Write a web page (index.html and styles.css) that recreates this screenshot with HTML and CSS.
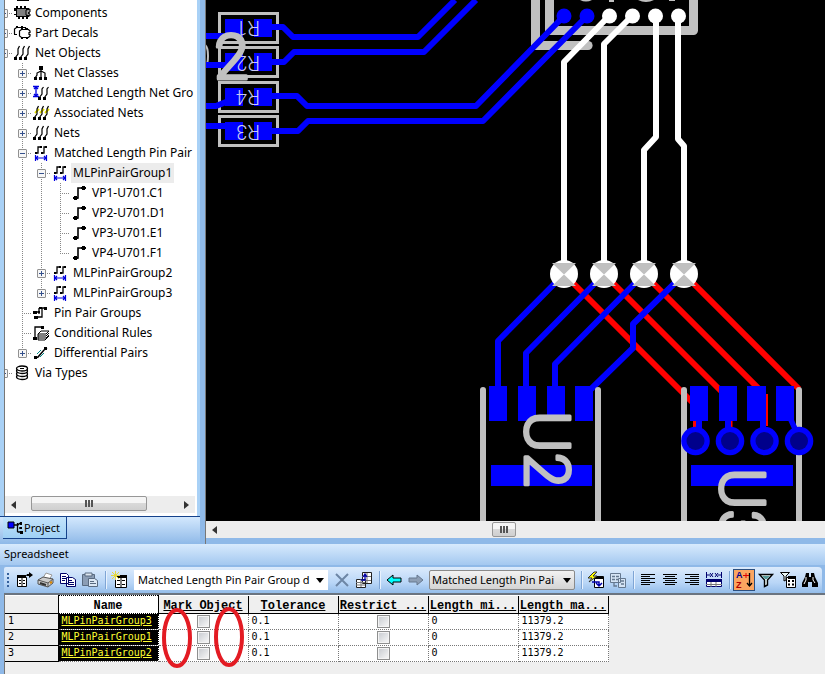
FILE: index.html
```html
<!DOCTYPE html>
<html lang="en">
<head>
<meta charset="utf-8">
<title>PCB Layout - Project</title>
<link rel="stylesheet" href="styles.css">
</head>
<body>
<svg class="defs" aria-hidden="true">
  <symbol id="i-comp" viewBox="0 0 18 16"><path d="M1 3h2V1h2v2h2V1h2v2h2V1h2v2h3v9h-1v2h-2v-2h-2v2H9v-2H7v2H5v-2H3v-2H1V9h2V6H1z" fill="#000"/><path d="M4 4h9v7H4z" fill="#808080"/><path d="M13 5l4-1v3l-2 1 2 1v2l-4-1z" fill="#999" stroke="#000"/></symbol>
  <symbol id="i-decal" viewBox="0 0 18 16"><path d="M1.500 9V4l2-1.500h9V4M1 9.500h3M6.500 6l2-1.500h7l1.500 1.500v1.500h-1v2h1V11l-1.500 1.500h-7L6.500 11z" fill="#fff" stroke="#000" stroke-width="1.200"/><path d="M3 2h2M8 2h2M8 13h2M13 13h2M8 4h2M13 4h2" stroke="#000" stroke-width="2"/></symbol>
  <symbol id="i-nets" viewBox="0 0 18 16"><g fill="none" stroke="#000" stroke-width="1.200"><path d="M6.500 1L5 4v5l-3 4M11.500 1L10 4v5l-3 4M16.500 1L15 4v5l-3 4"/></g><path d="M1 12h3v3H1zM6 12h3v3H6zM11 12h3v3h-3z"/></symbol>
  <symbol id="i-assoc" viewBox="0 0 18 16"><path d="M3 8l4-4M8 8l4-4M13 8l4-4" stroke="#e8e000" stroke-width="2"/><use href="#i-nets"/></symbol>
  <symbol id="i-class" viewBox="0 0 18 16"><g fill="none" stroke="#000" stroke-width="1.200"><path d="M9 1v12M9 6L5 8v2l-2 3M9 6l4 2v5"/></g><path d="M7 1h4v4H7zM2 12h3v3H2zM7 12h3v3H7zM12 12h3v3h-3z"/></symbol>
  <symbol id="i-mlnet" viewBox="0 0 18 16"><path d="M1 1.500h6M1 11.500h6M4 2v9M2 4l2-2 2 2M2 9l2 2 2-2" fill="none" stroke="#0000e0" stroke-width="1.300"/><path d="M11.500 2L10 4v5l-3 4M16.500 2L15 4v5l-3 4" fill="none" stroke="#000" stroke-width="1.200"/><path d="M6 12h3v3H6zM11 12h3v3h-3z"/></symbol>
  <symbol id="i-mlpin" viewBox="0 0 18 16"><path d="M3 8h3V2h4M9 8h3V2h3" fill="none" stroke="#000" stroke-width="1.300"/><path d="M3 7h2v2H3zM8 1h2v2H8zM9 7h2v2H9zM13 1h2v2h-2z"/><path d="M3.500 10v6M14.500 10v6M4 13h10M6 11l-2 2 2 2M12 11l2 2-2 2" fill="none" stroke="#0000e0" stroke-width="1.200"/></symbol>
  <symbol id="i-pin" viewBox="0 0 18 16"><path d="M4 13h4V3h5" fill="none" stroke="#000" stroke-width="1.600"/><path d="M4 11h3v4H4zM3 12h5v2H3zM12 1h3v4h-3zM11 2h5v2h-5z"/></symbol>
  <symbol id="i-pinpair" viewBox="0 0 18 16"><path d="M3 7h4M3 12h7V3h4M7 3v6" fill="none" stroke="#000" stroke-width="1.300"/><path d="M1 6h4v3H1zM2 11h4v3H2zM7 2h3v2H7zM12 2h3v3h-3zM6 6h2v2H6z"/></symbol>
  <symbol id="i-cond" viewBox="0 0 18 16"><path d="M3 13V2h8" fill="none" stroke="#000" stroke-width="1.300"/><path d="M1 12h4v3H1zM9 1h3v3H9z"/><path d="M6 9l3-3h8l-3 3zM6 11h8l3-3M6 13h8l3-3M6 15h7l4-4M6 9v6" fill="#fff" stroke="#000"/></symbol>
  <symbol id="i-diff" viewBox="0 0 18 16"><path d="M3 13l3-1 6-7 3-2" fill="none" stroke="#000" stroke-width="1.500"/><path d="M5 9l4-4M8 12l4-4" stroke="#088" fill="none"/><path d="M2 11h3v3H2zM12 2h3v3h-3z"/></symbol>
  <symbol id="i-via" viewBox="0 0 18 16"><g fill="#fff" stroke="#000" stroke-width="1.300"><ellipse cx="9" cy="12" rx="5.500" ry="2.500"/><ellipse cx="9" cy="9" rx="5.500" ry="2.500"/><ellipse cx="9" cy="6" rx="5.500" ry="2.500"/><ellipse cx="9" cy="3.500" rx="5.500" ry="2.500"/></g><path d="M7 3.500h4" stroke="#000"/></symbol>
</svg>

<main class="work">
  <aside class="side">
    <div class="panel">
      <ul class="tree">
        <li><i class="g"></i><i class="stub"></i></li>
        <li><i class="g h"><button class="box plus" aria-label="Expand"></button></i><svg class="ic"><use href="#i-comp"/></svg><span>Components</span></li>
        <li><i class="g h"><button class="box plus" aria-label="Expand"></button></i><svg class="ic"><use href="#i-decal"/></svg><span>Part Decals</span></li>
        <li><i class="g h"><button class="box" aria-label="Collapse"></button></i><svg class="ic"><use href="#i-nets"/></svg><span>Net Objects</span></li>
        <li><i class="g"></i><i class="g v h"><button class="box plus" aria-label="Expand"></button></i><svg class="ic"><use href="#i-class"/></svg><span>Net Classes</span></li>
        <li><i class="g"></i><i class="g v h"><button class="box plus" aria-label="Expand"></button></i><svg class="ic"><use href="#i-mlnet"/></svg><span>Matched Length Net Gro</span></li>
        <li><i class="g"></i><i class="g v h"><button class="box plus" aria-label="Expand"></button></i><svg class="ic"><use href="#i-assoc"/></svg><span>Associated Nets</span></li>
        <li><i class="g"></i><i class="g v h"><button class="box plus" aria-label="Expand"></button></i><svg class="ic"><use href="#i-nets"/></svg><span>Nets</span></li>
        <li><i class="g"></i><i class="g v h"><button class="box" aria-label="Collapse"></button></i><svg class="ic"><use href="#i-mlpin"/></svg><span>Matched Length Pin Pair</span></li>
        <li><i class="g"></i><i class="g v"></i><i class="g v h"><button class="box" aria-label="Collapse"></button></i><svg class="ic"><use href="#i-mlpin"/></svg><span class="sel">MLPinPairGroup1</span></li>
        <li><i class="g"></i><i class="g v"></i><i class="g v"></i><i class="g v h"></i><svg class="ic"><use href="#i-pin"/></svg><span>VP1-U701.C1</span></li>
        <li><i class="g"></i><i class="g v"></i><i class="g v"></i><i class="g v h"></i><svg class="ic"><use href="#i-pin"/></svg><span>VP2-U701.D1</span></li>
        <li><i class="g"></i><i class="g v"></i><i class="g v"></i><i class="g v h"></i><svg class="ic"><use href="#i-pin"/></svg><span>VP3-U701.E1</span></li>
        <li><i class="g"></i><i class="g v"></i><i class="g v"></i><i class="g v h end"></i><svg class="ic"><use href="#i-pin"/></svg><span>VP4-U701.F1</span></li>
        <li><i class="g"></i><i class="g v"></i><i class="g v h"><button class="box plus" aria-label="Expand"></button></i><svg class="ic"><use href="#i-mlpin"/></svg><span>MLPinPairGroup2</span></li>
        <li><i class="g"></i><i class="g v"></i><i class="g v h end"><button class="box plus" aria-label="Expand"></button></i><svg class="ic"><use href="#i-mlpin"/></svg><span>MLPinPairGroup3</span></li>
        <li><i class="g"></i><i class="g v h"></i><svg class="ic"><use href="#i-pinpair"/></svg><span>Pin Pair Groups</span></li>
        <li><i class="g"></i><i class="g v h"></i><svg class="ic"><use href="#i-cond"/></svg><span>Conditional Rules</span></li>
        <li><i class="g"></i><i class="g v h end"><button class="box plus" aria-label="Expand"></button></i><svg class="ic"><use href="#i-diff"/></svg><span>Differential Pairs</span></li>
        <li><i class="g h"><button class="box plus" aria-label="Expand"></button></i><svg class="ic"><use href="#i-via"/></svg><span>Via Types</span></li>
      </ul>
      <div class="hbar">
        <button class="arr" aria-label="Scroll left"><svg viewBox="0 0 5 8"><path d="M5 0v8L0 4z"/></svg></button>
        <div class="rail"><div class="thumb"></div></div>
        <button class="arr" aria-label="Scroll right"><svg viewBox="0 0 5 8"><path d="M0 0v8l5-4z"/></svg></button>
      </div>
    </div>
    <div class="tabs">
      <button class="tab"><svg viewBox="0 0 16 14"><path d="M1 1h6v6H1z" fill="#00f" stroke="#000"/><path d="M7 4h3M10.500 2v9M10.500 4.500l2-2h2M10.500 11h4M12 7h3" fill="none" stroke="#000" stroke-width="1.300"/><path d="M13 1h2v3h-2zM13 10h3v3h-3zM13 6h2v2h-2z"/></svg>Project</button>
    </div>
  </aside>

  <section class="view">
    <svg class="board" viewBox="206 0 619 521" preserveAspectRatio="xMinYMin slice" role="img" aria-label="Board layout">
      <rect x="206" y="0" width="2000" height="2000" fill="#000"/>
      <g fill="none" stroke="#c0c0c0" stroke-width="3">
        <rect x="219.500" y="13.500" width="58" height="29"/><rect x="219.500" y="47.500" width="58" height="29"/><rect x="219.500" y="82.500" width="58" height="29"/><rect x="219.500" y="116.500" width="58" height="29"/>
        <path d="M205 45q3 2 3 11t-3 10" stroke-width="2"/>
      </g>
      <g fill="none" stroke="#c0c0c0" stroke-width="9">
        <path d="M535.500 0v45.500H588" stroke-linejoin="miter"/><path d="M588 45.500h.1" stroke-linecap="round"/>
        <path d="M549.500 0v30.500H693.500V0" stroke-linejoin="round"/>
      </g>
      <path d="M580 0h12q-6 3-12 0zM609 0h5v2h-5zM638 0h16q-8 4-16 0zM669 0h6v1h-6z" fill="#c0c0c0"/>
      <g fill="#00f">
        <path d="M225 19h18v18h-18zM254 19h18v18h-18zM225 53h18v18h-18zM254 53h18v18h-18zM225 88h18v18h-18zM254 88h18v18h-18zM225 122h18v18h-18zM254 122h18v18h-18z"/>
        <circle cx="564" cy="16" r="7.500"/><circle cx="587" cy="16" r="7.500"/>
      </g>
      <g fill="none" stroke="#f00" stroke-width="6">
        <path d="M564 274L692 402M604 274l118 118M644 274l118 118M684 274l115 115"/>
        <path d="M694.500 418v10M731 418v10" stroke-width="3"/>
      </g>
      <g fill="none" stroke="#00f" stroke-width="6" stroke-linejoin="round">
        <path d="M564 16L476 106H307L297 96H268M587 16L483 121H308L298 131H268M455 0L418 37H293L283 27H268M476 0L424 52H294L284 62H268"/>
        <path d="M206 36h20M206 65h20M206 106h10l10-4M206 126h20"/>
        <path d="M564 274L498 341v60M604 274L526 353v48M644 274L555 364v37M684 274L633 324v24L588 392"/>
      </g>
      <g fill="none" stroke="#fff" stroke-width="6" stroke-linejoin="round"><path d="M609 16L564 62V274M632 16L604 44V274M656 16V137L644 150V274M678 16V139L684 146V274"/></g>
      <g fill="#fff"><circle cx="609.500" cy="16" r="7.500"/><circle cx="632.500" cy="16" r="7.500"/><circle cx="655.500" cy="16" r="7.500"/><circle cx="678.500" cy="16" r="7.500"/>
        <circle cx="564" cy="274" r="14"/><circle cx="604" cy="274" r="14"/><circle cx="644" cy="274" r="14"/><circle cx="684" cy="274" r="14"/></g>
      <path d="M552 263h24l-24 23h24zM592 263h24l-24 23h24zM632 263h24l-24 23h24zM672 263h24l-24 23h24z" fill="#c0c0c0"/>
      <g stroke="#c0c0c0" stroke-width="6" stroke-linecap="round"><path d="M483 390V2000M598 390V2000M684 390V2000M799 390V2000"/></g>
      <g fill="#00f">
        <path d="M489 386h18v35h-18zM518 386h18v35h-18zM547 386h18v35h-18zM575 386h18v35h-18zM491 465h101v21H491z"/>
        <path d="M690 386h18v35h-18zM719 386h18v35h-18zM747 386h19v35h-19zM776 386h18v35h-18zM691 465h102v21H691z"/>
        <path d="M696 420h6v10h-6zM725 420h6v10h-6zM760 420h6v10h-6zM788 420h6l5 11h-6z"/>
        <circle cx="695.500" cy="441" r="14.300"/><circle cx="730" cy="441" r="14.300"/><circle cx="764.500" cy="441" r="14.300"/><circle cx="799" cy="441" r="14.300"/>
      </g>
      <path d="M767 394v32" stroke="#f00" stroke-width="2"/>
      <g fill="#00008b"><circle cx="695.500" cy="441" r="9"/><circle cx="730" cy="441" r="9"/><circle cx="764.500" cy="441" r="9"/><circle cx="799" cy="441" r="9"/></g>
      <text class="ref" transform="translate(260 21) rotate(180)">R1</text>
      <text class="ref" transform="translate(260 56) rotate(180)">R2</text>
      <text class="ref" transform="translate(260 90) rotate(180)">R4</text>
      <text class="ref" transform="translate(260 125) rotate(180)">R3</text>
      <text class="big" x="214" y="79">2</text>
      <text class="big" transform="translate(525 411) rotate(90)">U2</text>
      <text class="big" transform="translate(720 468) rotate(90)">U3</text>
    </svg>
    <div class="hbar">
      <button class="arr" aria-label="Scroll left"><svg viewBox="0 0 5 8"><path d="M5 0v8L0 4z"/></svg></button>
      <div class="rail mid"><div class="thumb small"></div></div>
    </div>
  </section>
</main>

<section class="sheet">
  <h2>Spreadsheet</h2>
  <div class="tools">
    <i class="grip"></i>
    <button aria-label="Export"><svg viewBox="0 0 18 18"><path d="M2.500 6.500h9v9h-9z" fill="#fff" stroke="#000"/><path d="M2 4h9v3H2zM11 5l1-2h2V1l4 3-4 3V5z"/><path d="M4 9.500h2M8 9.500h2M4 12.500h2M8 12.500h2M7 7v9" stroke="#000"/></svg></button>
    <button aria-label="Print"><svg viewBox="0 0 18 18"><path d="M6 7l3-5 6 2-3 5z" fill="#fff" stroke="#999"/><path d="M1 9l5-3 10 2v4l-5 4-10-3z" fill="#ccc" stroke="#555"/><path d="M1 9l10 3 5-4M11 12v4" fill="none" stroke="#555"/><path d="M3 12l6 2" stroke="#333" stroke-width="2"/><path d="M13 12l2-1" stroke="#d80" stroke-width="2"/></svg></button>
    <button aria-label="Copy"><svg viewBox="0 0 18 18"><path d="M1.500 2.500h6l2 2v8h-8zM7.500 6.500h6l3 2v7h-9z" fill="#fff" stroke="#006"/><path d="M3 5.500h4M3 7.500h4M3 9.500h3M9 9.500h4M9 11.500h6M9 13.500h6" stroke="#006"/></svg></button>
    <button aria-label="Paste"><svg viewBox="0 0 18 18"><path d="M1.500 3.500h12v11h-12z" fill="#8b9db5" stroke="#596a80"/><path d="M4 2h7v3H4z" fill="#dde6f0" stroke="#596a80"/><path d="M7.500 7.500h6l3 2v6h-9z" fill="#dce8f5" stroke="#596a80"/><path d="M9 10.500h4M9 12.500h6" stroke="#596a80"/></svg></button>
    <i class="sep"></i>
    <button aria-label="New"><svg viewBox="0 0 18 18"><path d="M4.500 5.500h11v11h-11z" fill="#fff" stroke="#000"/><path d="M6 4h10v3H6z"/><path d="M6 9.500h3M11 9.500h3M6 13.500h3M11 13.500h3M10 7v9" stroke="#000"/><path d="M1 1l7 7M8 1L1 8M4.500 0v9M0 4.500h9" stroke="#e5d840"/></svg></button>
    <span class="combo c1"><select aria-label="Object type"><option>Matched Length Pin Pair Group d</option></select></span>
    <button aria-label="Delete"><svg viewBox="0 0 18 18"><path d="M3 3l12 12M15 3L3 15" stroke="#6d86a5" stroke-width="2"/></svg></button>
    <button aria-label="Transpose"><svg viewBox="0 0 18 18"><path d="M7.500 1.500h9v11h-9zM1.500 8.500h9v8h-9z" fill="#fff" stroke="#222"/><path d="M7 5.500h9M7 9.500h9M12 2v10M1 11.500h9M1 14h9M6 8v8" stroke="#777"/><path d="M6 9h4V4M8 6l2-3 2 3" fill="none" stroke="#00a" stroke-width="1.300"/></svg></button>
    <i class="sep"></i>
    <button aria-label="Back"><svg viewBox="0 0 18 18"><path d="M2 9l6-5v3h8v4H8v3z" fill="#0ff" stroke="#000"/></svg></button>
    <button aria-label="Forward"><svg viewBox="0 0 18 18"><path d="M16 9l-6-5v3H2v4h8v3z" fill="#8e9fb5" stroke="#66788f"/></svg></button>
    <span class="combo c2"><select aria-label="Group"><option>Matched Length Pin Pai</option></select></span>
    <i class="sep"></i>
    <button aria-label="Apply"><svg viewBox="0 0 18 18"><path d="M7.500 5.500h9v11h-9z" fill="#fff" stroke="#000"/><path d="M7 6h10v2H7z"/><path d="M7 1L1 7h4l-3 4 8-6H6l4-4z" fill="#ff0" stroke="#333"/><path d="M5 11h7v3M9 12l3 3 3-3" fill="none" stroke="#00a" stroke-width="1.500"/></svg></button>
    <button aria-label="Group items"><svg viewBox="0 0 18 18"><path d="M1.500 2.500h10v9h-10zM9.500 7.500h7v9h-7z" fill="#d5e4f5" stroke="#65788f"/><path d="M3 5.500h3M7 5.500h3M3 8.500h3M7 8.500h2M11 10h4M5 12v3h3M12 13h3" fill="none" stroke="#65788f" stroke-width="1.300"/></svg></button>
    <i class="sep"></i>
    <button aria-label="Align left"><svg viewBox="0 0 18 18"><path d="M2 3.500h14M2 5.500h9M2 7.500h14M2 9.500h9M2 11.500h14M2 13.500h9" stroke="#000"/></svg></button>
    <button aria-label="Align center"><svg viewBox="0 0 18 18"><path d="M2 3.500h14M4 5.500h10M2 7.500h14M4 9.500h10M2 11.500h14M4 13.500h10" stroke="#000"/></svg></button>
    <button aria-label="Align right"><svg viewBox="0 0 18 18"><path d="M2 3.500h14M7 5.500h9M2 7.500h14M7 9.500h9M2 11.500h14M7 13.500h9" stroke="#000"/></svg></button>
    <button aria-label="Fit columns"><svg viewBox="0 0 18 18"><path d="M1.500 8.500h15v7h-15z" fill="#fff" stroke="#00006e"/><path d="M1 8h16v3H1z" fill="#00006e"/><path d="M6 11v5M11 11v5M1 13.500h16" stroke="#777"/><path d="M1.500 1v6M16.500 1v6M2 4h3M13 4h3M5 2l3 4M8 2L5 6M10 2l3 4M13 2l-3 4" stroke="#00006e"/></svg></button>
    <i class="sep"></i>
    <button class="on" aria-label="Sort"><svg viewBox="0 0 18 18"><path d="M14.500 2v13M12 12l2.500 3 2.500-3" fill="none" stroke="#000" stroke-width="1.300"/><path d="M11 2v5M8 4.500h6" stroke="#d00"/><text x="1" y="7" class="az a">A</text><text x="1" y="17" class="az z">Z</text></svg></button>
    <button aria-label="Filter"><svg viewBox="0 0 18 18"><path d="M2.500 3.500h13L10.500 9v5l-3 1.500V9z" fill="#e8f5f5" stroke="#000" stroke-width="1.400"/><path d="M5 5h8l-3 3H8z" fill="#599"/></svg></button>
    <button aria-label="Filter options"><svg viewBox="0 0 18 18"><path d="M7.500 6.500h9v10h-9z" fill="#fff" stroke="#000"/><path d="M9 5h8v3H9z"/><path d="M9 10h2M13 10h2M9 13.500h2M13 13.500h2" stroke="#000" stroke-width="2"/><path d="M1.500 1.500h9L7 5v4l-2 1V5z" fill="#e8f5f5" stroke="#000"/></svg></button>
    <button aria-label="Find"><svg viewBox="0 0 18 18"><path d="M5 2h3v4h2V2h3l1 4 3 6v4h-6v-5H7v5H1v-4l3-6z"/><path d="M5 6v3L3 13M12 6v3l2 3" stroke="#fff" fill="none"/></svg></button>
  </div>
  <div class="grid">
    <table>
      <colgroup><col class="cn"><col class="cname"><col class="cv" span="5"></colgroup>
      <thead><tr><th></th><th class="name">Name</th><th><u>Mark Object</u></th><th><u>Tolerance</u></th><th><u>Restrict ...</u></th><th><u>Length mi...</u></th><th><u>Length ma...</u></th></tr></thead>
      <tbody>
        <tr><th>1</th><td class="nm">MLPinPairGroup3</td><td class="ck"><input type="checkbox" aria-label="Mark MLPinPairGroup3"></td><td>0.1</td><td class="ck"><input type="checkbox" aria-label="Restrict MLPinPairGroup3"></td><td>0</td><td>11379.2</td></tr>
        <tr><th>2</th><td class="nm">MLPinPairGroup1</td><td class="ck"><input type="checkbox" aria-label="Mark MLPinPairGroup1"></td><td>0.1</td><td class="ck"><input type="checkbox" aria-label="Restrict MLPinPairGroup1"></td><td>0</td><td>11379.2</td></tr>
        <tr><th>3</th><td class="nm">MLPinPairGroup2</td><td class="ck"><input type="checkbox" aria-label="Mark MLPinPairGroup2"></td><td>0.1</td><td class="ck"><input type="checkbox" aria-label="Restrict MLPinPairGroup2"></td><td>0</td><td>11379.2</td></tr>
      </tbody>
    </table>
    <svg class="marks" viewBox="0 0 84 66" aria-hidden="true"><g fill="none" stroke="#e31b23" stroke-width="4"><ellipse cx="17" cy="34" rx="13" ry="28"/><ellipse cx="69" cy="33" rx="13" ry="28"/></g></svg>
  </div>
</section>
</body>
</html>
```
FILE: styles.css
```css
* { box-sizing: border-box; }
body {
  margin: 0;
  height: 100vh;
  display: flex;
  flex-direction: column;
  overflow: hidden;
  background: #a0c5ee;
  color: #000;
  font: 11px/16px "Noto Sans", "Open Sans", sans-serif;
}
button { padding: 0; border: 0; background: none; font: inherit; color: inherit; }
.defs { display: none; }

.work { flex: 1; min-height: 0; display: flex; background: #8fb9e8; }
.side { width: 200px; display: flex; flex-direction: column; }
.panel {
  flex: 1;
  min-height: 0;
  display: flex;
  flex-direction: column;
  border-left: 4px solid #a9d1f6;
  border-right: 3px solid #a9d1f6;
  background: #fff;
  box-shadow: inset 1px 0 #777;
}
.tree {
  flex: 1;
  min-height: 0;
  margin: 0 2px 0 1px;
  padding: 0;
  list-style: none;
  overflow: hidden;
  display: flex;
  flex-direction: column;
}
.tree li { flex: none; height: 20px; margin-left: -11px; display: flex; align-items: center; white-space: nowrap; }
.tree li:first-child { height: 3px; align-items: flex-start; }
.stub { width: 12px; height: 1px; margin-left: 4px; background: #000; }
.tree span { margin-left: 1px; padding: 0 2px; font-size: 12px; line-height: 20px; }
.tree .sel { background: #ececec; }
.ic { width: 18px; height: 16px; margin-right: 1px; flex: none; }
.g {
  width: 19px;
  height: 20px;
  flex: none;
  display: flex;
  align-items: center;
  justify-content: center;
  background-repeat: no-repeat;
}
.g.v { background-image: repeating-linear-gradient(#888 0 1px, transparent 1px 2px); background-size: 1px 20px; background-position: 9px 0; }
.g.h { background-image: repeating-linear-gradient(90deg, #888 0 1px, transparent 1px 2px); background-size: 10px 1px; background-position: 9px 10px; }
.g.v.h {
  background-image: repeating-linear-gradient(#888 0 1px, transparent 1px 2px), repeating-linear-gradient(90deg, #888 0 1px, transparent 1px 2px);
  background-size: 1px 20px, 10px 1px;
  background-position: 9px 0, 9px 10px;
}
.g.v.end { background-size: 1px 10px, 10px 1px; }
.box {
  width: 9px;
  height: 9px;
  border: 1px solid #919191;
  border-radius: 1px;
  background: linear-gradient(#34508c, #34508c) center / 5px 1px no-repeat, #f6f6f6;
}
.box.plus { background: linear-gradient(#34508c, #34508c) center / 5px 1px no-repeat, linear-gradient(#34508c, #34508c) center / 1px 5px no-repeat, #f6f6f6; }

.hbar { height: 17px; flex: none; display: flex; background: #ededed; }
.panel .hbar { margin: 0 2px 3px 1px; }
.arr { width: 17px; display: flex; align-items: center; justify-content: center; }
.arr svg { width: 5px; height: 8px; fill: #333; }
.rail { flex: 1; display: flex; }
.thumb {
  width: 116px;
  height: 15px;
  margin: 0 9px;
  border: 1px solid #979797;
  border-radius: 2px;
  background: repeating-linear-gradient(90deg, #555 0 2px, transparent 2px 3px) center / 8px 7px no-repeat, linear-gradient(#f5f5f5 0 45%, #d9d9d9 50%, #cfcfcf);
}
.mid { padding-left: 42%; }
.small { width: 24px; margin: 1px 9px; }

.tabs { height: 28px; padding-left: 3px; border-top: 1px solid #15428b; background: linear-gradient(#d3e8fd, #8fb9e8); }
.tab {
  height: 22px;
  padding: 0 6px 0 4px;
  display: flex;
  align-items: center;
  gap: 1px;
  border: 1px solid #15428b;
  border-width: 0 1px 1px 0;
  background: linear-gradient(#c4e4fb, #9fd0f5);
}
.tab svg { width: 16px; height: 14px; }

.view {
  flex: 1;
  min-width: 0;
  display: flex;
  flex-direction: column;
  margin-left: 5px;
  padding-bottom: 6px;
  border-left: 1px solid #777;
}
.board { flex: 1; min-height: 0; width: 100%; display: block; background: #000; }
.ref { font: 300 20px Roboto, sans-serif; fill: #c8c8f4; }
.big { font: 300 63px Roboto, sans-serif; fill: #c0c0c0; stroke: #c0c0c0; stroke-width: 3px; stroke-linejoin: round; }

.sheet { height: 130px; flex: none; display: flex; flex-direction: column; background: #8fb9e8; }
.sheet h2 { height: 21px; margin: 0; padding: 2px 4px; font: inherit; background: linear-gradient(#d8eafd, #a3c8f0); }
.tools {
  height: 26px;
  margin: 2px 3px 0 4px;
  display: flex;
  align-items: center;
  border-radius: 2px 4px 4px 2px;
  background: linear-gradient(#dcebfc, #b9d6f7 60%, #94bdea);
}
.tools button { width: 22px; height: 22px; flex: none; display: flex; align-items: center; justify-content: center; }
.tools svg { width: 18px; height: 18px; }
.tools .on { border: 1px solid #2b4f80; background: #fba560; }
.az { font: bold 9px "Liberation Sans", sans-serif; }
.a { fill: #00008b; }
.z { fill: #b00000; }
.grip { width: 2px; height: 14px; margin: 0 4px 0 3px; flex: none; background: repeating-linear-gradient(#34609c 0 2px, transparent 2px 4px); }
.sep { width: 1px; height: 18px; margin: 0 3px 0 4px; flex: none; background: #7fa5d5; box-shadow: 1px 0 #e8f2fe; }
.combo { position: relative; flex: none; height: 20px; margin: 0 2px; display: flex; }
.combo::after {
  content: "";
  position: absolute;
  right: 4px;
  top: 8px;
  border: 4px solid transparent;
  border-top: 5px solid #000;
  border-bottom: 0;
}
.combo select { appearance: none; width: 100%; padding: 0 16px 0 4px; border: 0; background: #fff; font: inherit; color: #000; overflow: hidden; }
.c1 { width: 194px; margin: 0 3px; }
.c2 { width: 146px; }
.c2 select { border: 1px solid #8a8a8a; border-radius: 2px; padding-left: 2px; background: linear-gradient(#f2f2f2, #d4d4d4); }

.grid { position: relative; flex: 1; margin-left: 4px; border-top: 2px solid #6a7480; border-left: 1px solid #777; background: #efefef; }
table { table-layout: fixed; width: 603px; border-collapse: collapse; font: 10px/14px "DejaVu Sans Mono", monospace; background: #fff; }
.cn { width: 53px; }
.cname { width: 100px; }
.cv { width: 90px; }
th, td { height: 16px; padding: 0 3px; text-align: left; white-space: nowrap; overflow: hidden; vertical-align: top; border: 1px dotted #777; }
thead th { height: 18px; vertical-align: bottom; text-align: center; font: bold 12px/14px "Liberation Mono", monospace; padding: 0 1px; background: #efefef; border: 1px solid #000; }
thead .name { border: 1px dotted #000; background: #fff; }
tbody th { background: #efefef; border: 1px solid #000; font-weight: normal; border-left: 0; }
tr > :first-child { border-left: 0; }
thead th { border-top: 0; }
.nm { background: #000; color: #ff3; text-decoration: underline; border-right-color: #000; }
.ck { text-align: center; }
.ck input { appearance: none; display: block; width: 13px; height: 13px; margin: 1px auto 0; border: 1px solid #8e8f8f; background: linear-gradient(135deg, #c5c9ce, #fafafa); box-shadow: inset 0 0 0 1px #f4f4f4; }
.marks { position: absolute; left: 155px; top: 9px; width: 84px; height: 66px; }
```
